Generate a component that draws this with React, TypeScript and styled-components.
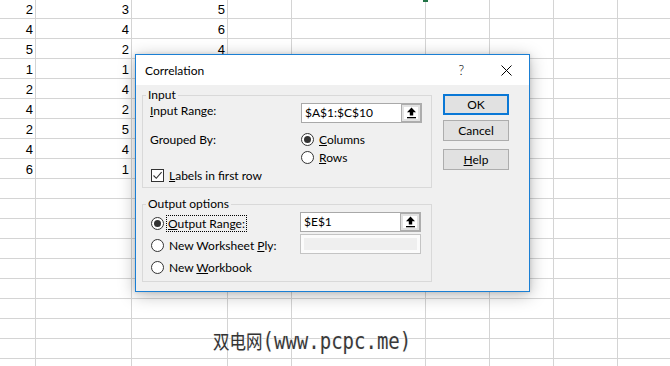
import React from 'react';
import styled, { createGlobalStyle } from 'styled-components';

const GlobalStyle = createGlobalStyle`
  html, body { margin: 0; padding: 0; background: #fff; overflow: hidden; }
  #root { width: 670px; height: 366px; }
`;

const Page = styled.div`
  position: relative;
  width: 670px;
  height: 366px;
  overflow: hidden;
  background: #fff;
`;

const COLS = [36, 96, 96, 64, 134, 64, 64, 64, 64, 64];

const Sheet = styled.div`
  display: grid;
  grid-template-columns: ${COLS.map((c) => `${c}px`).join(' ')};
  grid-auto-rows: 20px;
  margin-top: -1px;
  font-family: 'Liberation Sans', Arial, sans-serif;
  font-size: 13px;
  color: #000;
`;

const Cell = styled.div`
  box-sizing: border-box;
  border-right: 1px solid #d4d4d4;
  border-bottom: 1px solid #d4d4d4;
  text-align: right;
  padding: 1px 2px 0 0;
  line-height: 19px;
  overflow: hidden;
`;

const FillHandle = styled.div`
  position: absolute;
  left: 423px;
  top: 0;
  width: 5px;
  height: 2px;
  background: #217346;
`;

const Dialog = styled.div`
  position: absolute;
  left: 135px;
  top: 54px;
  width: 395px;
  height: 238px;
  box-sizing: border-box;
  border: 1px solid #1a7fd4;
  background: #f0f0f0;
  box-shadow: 0 3px 16px rgba(0, 0, 0, 0.28), 0 0 4px rgba(0, 0, 0, 0.12);
  font-family: Lato, 'Open Sans', sans-serif;
  font-size: 12px;
  color: #000;
  display: flex;
  flex-direction: column;
`;

const TitleBar = styled.div`
  height: 30px;
  flex: none;
  background: #fff;
  display: flex;
  align-items: center;
  justify-content: space-between;
  padding: 0 17px 0 9px;
`;

const Title = styled.span`
  font-size: 12px;
`;

const TitleControls = styled.div`
  display: flex;
  align-items: center;
  gap: 37px;
`;

const HelpGlyph = styled.span`
  font-size: 13px;
  font-weight: 300;
  line-height: 1;
`;

const Body = styled.div`
  flex: 1;
  display: flex;
  padding: 3px 0 0 6px;
`;

const LeftCol = styled.div`
  width: 290px;
  display: flex;
  flex-direction: column;
`;

const Group = styled.fieldset<{ $gapTop?: number }>`
  margin: ${(p) => p.$gapTop ?? 0}px 0 0 0;
  padding: 1px 7px 3px 7px;
  border: 1px solid #d9d9d9;
  min-width: 0;
  box-sizing: border-box;
  width: 290px;
`;

const Legend = styled.legend`
  margin-left: -4px;
  padding: 0 2px;
  line-height: 14px;
  font-size: 12px;
`;

const Row = styled.div<{ $h: number; $mt?: number }>`
  display: flex;
  align-items: center;
  height: ${(p) => p.$h}px;
  margin-top: ${(p) => p.$mt ?? 0}px;
`;

const LabelCol = styled.div`
  width: 151px;
  flex: none;
  align-self: flex-start;
`;

const Label = styled.span`
  white-space: nowrap;
`;

const Field = styled.div<{ $disabled?: boolean }>`
  width: 121px;
  height: 20px;
  box-sizing: border-box;
  border: 1px solid ${(p) => (p.$disabled ? '#c4c4c4' : '#a9a9a9')};
  background: ${(p) => (p.$disabled ? '#efefef' : '#fff')};
  box-shadow: ${(p) => (p.$disabled ? 'inset 0 0 0 3px #fbfbfb' : 'none')};
  display: flex;
  flex: none;
`;

const FieldText = styled.div`
  flex: 1;
  padding-left: 3px;
  line-height: 18px;
  font-size: 12px;
`;

const RefButton = styled.div`
  width: 21px;
  box-sizing: border-box;
  margin: -1px -1px -1px 0;
  border: 2px solid #adadad;
  border-left-width: 1px;
  background: #fff;
  box-shadow: inset 0 0 0 2px #e3e3e3;
  display: flex;
  align-items: center;
  justify-content: center;
`;

const Stack = styled.div<{ $gap?: number }>`
  display: flex;
  flex-direction: column;
  gap: ${(p) => p.$gap ?? 0}px;
`;

const Option = styled.label<{ $h: number; $ml?: number }>`
  display: flex;
  align-items: center;
  height: ${(p) => p.$h}px;
  margin-left: ${(p) => p.$ml ?? 0}px;
  gap: 5px;
  white-space: nowrap;
`;

const Radio = styled.span<{ $on?: boolean }>`
  width: 13px;
  height: 13px;
  box-sizing: border-box;
  border: 1px solid #333;
  border-radius: 50%;
  background: #fff;
  flex: none;
  display: flex;
  align-items: center;
  justify-content: center;
  &::after {
    content: '';
    width: 7px;
    height: 7px;
    border-radius: 50%;
    background: #333;
    display: ${(p) => (p.$on ? 'block' : 'none')};
  }
`;

const Check = styled.span`
  width: 13px;
  height: 13px;
  box-sizing: border-box;
  border: 1px solid #333;
  background: #fff;
  flex: none;
  display: flex;
  align-items: center;
  justify-content: center;
`;

const Focus = styled.span`
  outline: 1px dotted #000;
  outline-offset: 0;
  padding: 0 1px;
  margin-left: -2px;
  line-height: 15px;
`;

const OutputGrid = styled.div`
  display: flex;
`;

const OutLeft = styled.div`
  width: 150px;
  flex: none;
  padding-top: 1px;
  display: flex;
  flex-direction: column;
`;

const ButtonCol = styled.div`
  margin: 6px 0 0 11px;
  display: flex;
  flex-direction: column;
`;

const Button = styled.button<{ $primary?: boolean; $mt?: number }>`
  width: 66px;
  height: 21px;
  box-sizing: border-box;
  margin-top: ${(p) => p.$mt ?? 0}px;
  padding: 0;
  background: #e1e1e1;
  border: ${(p) => (p.$primary ? '2px solid #0a78d6' : '1px solid #adadad')};
  font-family: Lato, 'Open Sans', sans-serif;
  font-size: 12px;
  color: #000;
  line-height: 1;
`;

const Watermark = styled.div`
  position: absolute;
  left: 213px;
  top: 329px;
  line-height: 20px;
  white-space: nowrap;
  color: #333;
  transform: scaleY(1.2);
  transform-origin: top left;
  text-shadow: 0 0 2px #fff, 0 0 2px #fff, 0 0 1px #bbb;
  display: flex;
  align-items: baseline;
`;

const WmHan = styled.span`
  font-family: 'Noto Sans CJK SC', sans-serif;
  font-size: 16.5px;
`;

const WmLatin = styled.span`
  font-family: 'DejaVu Sans Mono', 'Noto Sans CJK SC', monospace;
  font-size: 19px;
  color: #3a3a3a;
`;

const UpArrow = () => (
  <svg width="11" height="12" viewBox="0 0 11 12">
    <path d="M5.5 0.5 L10 5.2 H7.2 V8.6 H3.8 V5.2 H1 Z" fill="#000" />
    <rect x="1" y="10" width="9" height="1.3" fill="#000" />
  </svg>
);

const CloseIcon = () => (
  <svg width="11" height="11" viewBox="0 0 11 11">
    <path d="M0.5 0.5 L10.5 10.5 M10.5 0.5 L0.5 10.5" stroke="#000" strokeWidth="1" fill="none" />
  </svg>
);

const CheckMark = () => (
  <svg width="11" height="11" viewBox="0 0 11 11">
    <path d="M1.5 5.5 L4.3 8.3 L9.6 2.2" stroke="#333" strokeWidth="1.1" fill="none" />
  </svg>
);

const DATA: (number | '')[][] = [
  [2, 3, 5],
  [4, 4, 6],
  [5, 2, 4],
  [1, 1, ''],
  [2, 4, ''],
  [4, 2, ''],
  [2, 5, ''],
  [4, 4, ''],
  [6, 1, ''],
];

const ROWS = 19;

export default function App() {
  const cells: React.ReactNode[] = [];
  for (let r = 0; r < ROWS; r++) {
    for (let c = 0; c < COLS.length; c++) {
      const v = r < DATA.length && c < 3 ? DATA[r][c] : '';
      cells.push(<Cell key={`${r}-${c}`}>{v}</Cell>);
    }
  }
  return (
    <Page>
      <GlobalStyle />
      <Sheet>{cells}</Sheet>
      <FillHandle />
      <Dialog>
        <TitleBar>
          <Title>Correlation</Title>
          <TitleControls>
            <HelpGlyph>?</HelpGlyph>
            <CloseIcon />
          </TitleControls>
        </TitleBar>
        <Body>
          <LeftCol>
            <Group>
              <Legend>Input</Legend>
              <Row $h={20}>
                <LabelCol>
                  <Label>
                    <u>I</u>nput Range:
                  </Label>
                </LabelCol>
                <Field>
                  <FieldText>$A$1:$C$10</FieldText>
                  <RefButton>
                    <UpArrow />
                  </RefButton>
                </Field>
              </Row>
              <Row $h={36} $mt={7}>
                <LabelCol>
                  <Option $h={18}>
                    <Label>Grouped By:</Label>
                  </Option>
                </LabelCol>
                <Stack>
                  <Option $h={18}>
                    <Radio $on />
                    <span>
                      <u>C</u>olumns
                    </span>
                  </Option>
                  <Option $h={18}>
                    <Radio />
                    <span>
                      <u>R</u>ows
                    </span>
                  </Option>
                </Stack>
              </Row>
              <Row $h={17} $mt={1}>
                <Option $h={17} $ml={1}>
                  <Check>
                    <CheckMark />
                  </Check>
                  <span>
                    <u>L</u>abels in first row
                  </span>
                </Option>
              </Row>
            </Group>
            <Group $gapTop={9}>
              <Legend>Output options</Legend>
              <OutputGrid>
                <OutLeft>
                  <Option $h={21} $ml={1}>
                    <Radio $on />
                    <Focus>
                      <u>O</u>utput Range:
                    </Focus>
                  </Option>
                  <Option $h={22} $ml={1}>
                    <Radio />
                    <span>
                      New Worksheet <u>P</u>ly:
                    </span>
                  </Option>
                  <Option $h={22} $ml={1}>
                    <Radio />
                    <span>
                      New <u>W</u>orkbook
                    </span>
                  </Option>
                </OutLeft>
                <Stack $gap={2}>
                  <Field>
                    <FieldText>$E$1</FieldText>
                    <RefButton>
                      <UpArrow />
                    </RefButton>
                  </Field>
                  <Field $disabled />
                </Stack>
              </OutputGrid>
            </Group>
          </LeftCol>
          <ButtonCol>
            <Button $primary>OK</Button>
            <Button $mt={5}>Cancel</Button>
            <Button $mt={8}>
              <u>H</u>elp
            </Button>
          </ButtonCol>
        </Body>
      </Dialog>
      <Watermark>
        <WmHan>双电网</WmHan>
        <WmLatin>(www.pcpc.me)</WmLatin>
      </Watermark>
    </Page>
  );
}
